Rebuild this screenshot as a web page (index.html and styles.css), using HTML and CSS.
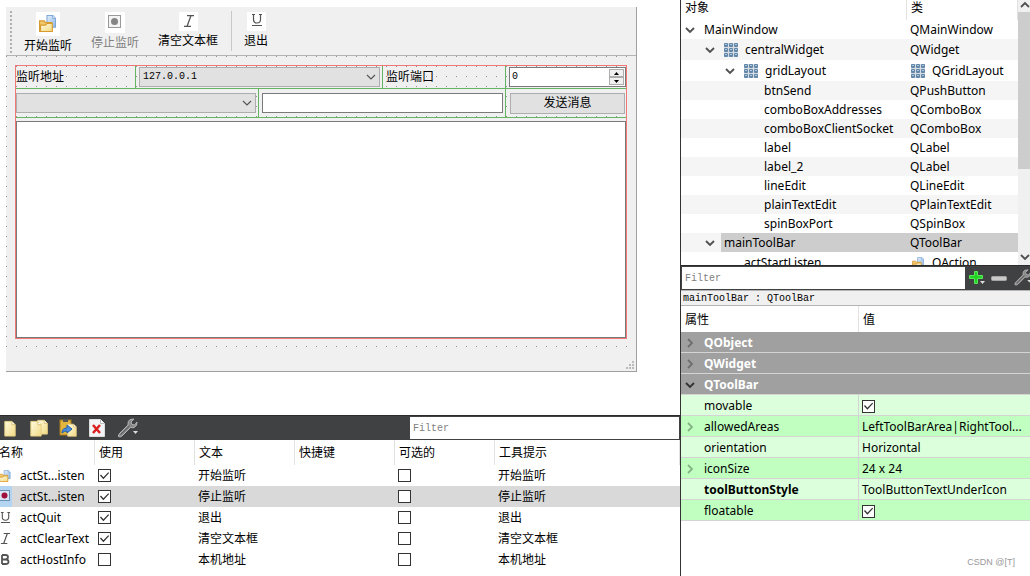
FILE: index.html
```
<!DOCTYPE html>
<html lang="zh-CN">
<head>
<meta charset="utf-8">
<title>MainWindow</title>
<link rel="stylesheet" href="styles.css">
</head>
<body>
<svg class="defs" aria-hidden="true">
  <defs>
    <linearGradient id="gold" x1="0" y1="0" x2="1" y2="1"><stop offset="0" stop-color="#fffbe0"/><stop offset="1" stop-color="#f1d983"/></linearGradient>
    <linearGradient id="blue" x1="0" y1="0" x2="1" y2="1"><stop offset="0" stop-color="#e3effb"/><stop offset="1" stop-color="#8fb8e6"/></linearGradient>
    <symbol id="open" viewBox="0 0 16 16">
      <path d="M7.500 .5H13L15.500 3v8.500h-8z" fill="url(#blue)" stroke="#7ea7d8"/>
      <path d="M13 .5V3h2.500" fill="#fff" stroke="#7ea7d8"/>
      <path d="M.5 5.500H5L6 7h6v8.500H.5z" fill="#f2c66a" stroke="#d39a35"/>
      <path d="M1.500 9.500H6L7.500 8h5v7.500h-11z" fill="url(#gold)" stroke="#d99a2c"/>
    </symbol>
    <symbol id="italic" viewBox="0 0 12 12"><path d="M4 .5h7M1 11.500h7M8 .5L4 11.500" fill="none" stroke="#555" stroke-width="1.300"/></symbol>
    <symbol id="underline" viewBox="0 0 12 12"><path d="M1 .5h3M8 .5h3M2.500 .5v5q0 3.500 3.500 3.500t3.500-3.500v-5M1 11.500h10" fill="none" stroke="#555" stroke-width="1.200"/></symbol>
    <symbol id="gridicon" viewBox="0 0 14 14">
      <rect width="14" height="14" fill="#d5dce3"/>
      <g fill="#6487a8"><rect width="4" height="4" rx="1"/><rect x="5" width="4" height="4" rx="1"/><rect x="10" width="4" height="4" rx="1"/><rect y="5" width="4" height="4" rx="1"/><rect x="5" y="5" width="4" height="4" rx="1"/><rect x="10" y="5" width="4" height="4" rx="1"/><rect y="10" width="4" height="4" rx="1"/><rect x="5" y="10" width="4" height="4" rx="1"/><rect x="10" y="10" width="4" height="4" rx="1"/></g>
      <path d="M1 1.500h2M6 1.500h2M11 1.500h2M1 6.500h2M6 6.500h2M11 6.500h2M1 11.500h2M6 11.500h2M11 11.500h2" stroke="#a9c8e2"/>
    </symbol>
    <symbol id="down" viewBox="0 0 10 10"><path d="M1 3l4 4 4-4" fill="none" stroke="currentColor" stroke-width="1.800"/></symbol>
    <symbol id="thin" viewBox="0 0 10 10"><path d="M1 3l4 4 4-4" fill="none" stroke="#555" stroke-width="1.200"/></symbol>
    <symbol id="right" viewBox="0 0 10 10"><path d="M3 1l4 4-4 4" fill="none" stroke="currentColor" stroke-width="1.800"/></symbol>
    <symbol id="page" viewBox="0 0 12 18"><path d="M.5 1.500H8L11.500 5v12H.5z" fill="url(#gold)" stroke="#e8cf85"/><path d="M8 1.500V5h3.500" fill="#fff" stroke="#d9bd6c"/></symbol>
    <symbol id="wrench" viewBox="0 0 22 20"><path d="M1.500 18.500Q1 17 3 15L11 7Q10.500 3 13 1.500L17 1l-3 3 1 2.500 2.500.5 2.500-3Q20.500 8 17 9.500q-2 .5-3.500 0L5 18q-2 1.500-3.500.5z" fill="#888" stroke="#b5b5b5"/><path d="M3.500 16.500L12.500 8" stroke="#555"/><path d="M16 13h5l-2.500 3z" fill="#ddd"/></symbol>
  </defs>
</svg>
<div class="designer">
  <main class="left">
    <section class="canvas">
      <div class="form">
        <div class="toolbar">
          <span class="handle"></span>
          <button class="tool"><svg class="pic pic-l" viewBox="0 0 24 24"><use href="#open" x="3" y="3" width="17" height="17"/></svg><span>开始监听</span></button>
          <button class="tool" disabled><svg class="pic pic-m" viewBox="0 0 20 21"><rect x="3.500" y="3.500" width="12" height="12" fill="#f4f4f4" stroke="#999"/><circle cx="9.500" cy="9.500" r="3.500" fill="#858585"/></svg><span>停止监听</span></button>
          <button class="tool"><svg class="pic pic-s" viewBox="0 0 19 19"><use href="#italic" x="4" y="3" width="12" height="12"/></svg><span>清空文本框</span></button>
          <span class="sep"></span>
          <button class="tool"><svg class="pic pic-s" viewBox="0 0 19 19"><use href="#underline" x="4" y="2" width="12" height="12"/></svg><span>退出</span></button>
        </div>
        <div class="central">
          <div class="layout">
            <label class="cell" for="addr">监听地址</label>
            <div class="cell two edge"><div class="combo"><select id="addr"><option>127.0.0.1</option></select><svg><use href="#thin"/></svg></div></div>
            <label class="cell edge" for="port">监听端口</label>
            <div class="cell edge"><div class="spin"><input id="port" type="number" value="0"><div class="steps"><button aria-label="增加"><svg viewBox="0 0 5 3"><path d="M0 3L2.500 0 5 3z"/></svg></button><button aria-label="减少"><svg viewBox="0 0 5 3"><path d="M0 0L2.500 3 5 0z"/></svg></button></div></div></div>
            <div class="cell two tall"><div class="combo wide"><select aria-label="客户端"><option></option></select><svg><use href="#thin"/></svg></div></div>
            <div class="cell two tall edge"><input class="line" type="text" aria-label="消息"></div>
            <div class="cell tall edge"><button class="send">发送消息</button></div>
            <textarea class="plain" aria-label="记录"></textarea>
          </div>
        </div>
        <div class="status"><svg viewBox="0 0 8 8"><path d="M6 0h2v2H6zM3 3h2v2H3zM6 3h2v2H6zM0 6h2v2H0zM3 6h2v2H3zM6 6h2v2H6z" fill="#bbb"/></svg></div>
      </div>
    </section>
    <section class="actions">
      <div class="darkbar">
        <div class="icons">
          <svg class="i-page"><use href="#page"/></svg>
          <svg class="i-std" viewBox="0 0 18 18"><use href="#page" x="7" width="11" height="16"/><use href="#page" x="0" y="1" width="12" height="17"/></svg>
          <svg class="i-std" viewBox="0 0 18 18"><rect x="1" y="1" width="11" height="15" fill="#e4b63d" stroke="#a87a1c"/><rect x="4" y="0" width="5" height="3" fill="#555"/><use href="#page" x="8" y="4" width="10" height="14"/><path d="M3 14q0-5 5-5V6l5 4-5 4v-2q-3 0-5 2z" fill="#4d8fe0" stroke="#245fa8"/></svg>
          <svg class="i-std" viewBox="0 0 18 18"><path d="M1.500.5h11l4 4v13h-15z" fill="#f3f4f6" stroke="#ddd"/><path d="M12.500.5v4h4" fill="#fff" stroke="#bbb"/><path d="M5 6l7 8M12 6l-7 8" stroke="#dc1f1f" stroke-width="2.500"/></svg>
          <svg class="i-wrench"><use href="#wrench"/></svg>
        </div>
        <input class="filter" type="text" placeholder="Filter" aria-label="Filter">
      </div>
      <table class="acttable">
        <thead><tr><th class="c-name">名称</th><th class="c-std">使用</th><th class="c-std">文本</th><th class="c-std">快捷键</th><th class="c-std">可选的</th><th>工具提示</th></tr></thead>
        <tbody>
          <tr><td><div class="nm"><svg class="cut" viewBox="0 0 12 12"><use href="#open" x="-2" width="13" height="12"/></svg>actSt...isten</div></td><td><input type="checkbox" checked aria-label="使用"></td><td>开始监听</td><td></td><td><input type="checkbox" aria-label="可选的"></td><td>开始监听</td></tr>
          <tr class="sel"><td><div class="nm"><svg class="cut chosen" viewBox="0 0 12 21"><rect x="-1.500" y="4.500" width="11" height="10" fill="#d9e5f2" stroke="#6d8fb3"/><circle cx="4.500" cy="9.500" r="3" fill="#a0103c"/></svg>actSt...isten</div></td><td><input type="checkbox" checked aria-label="使用"></td><td>停止监听</td><td></td><td><input type="checkbox" aria-label="可选的"></td><td>停止监听</td></tr>
          <tr><td><div class="nm"><svg class="cut" viewBox="0 0 12 12"><use href="#underline" x="0" width="11" height="11"/></svg>actQuit</div></td><td><input type="checkbox" checked aria-label="使用"></td><td>退出</td><td></td><td><input type="checkbox" aria-label="可选的"></td><td>退出</td></tr>
          <tr><td><div class="nm"><svg class="cut" viewBox="0 0 12 12"><use href="#italic" x="0" width="11" height="11"/></svg>actClearText</div></td><td><input type="checkbox" checked aria-label="使用"></td><td>清空文本框</td><td></td><td><input type="checkbox" aria-label="可选的"></td><td>清空文本框</td></tr>
          <tr><td><div class="nm"><svg class="cut" viewBox="0 0 12 12"><path d="M2 1v9M2 1h3.500q2.500 0 2.500 2T5.500 5.500H2M5.500 5.500Q8.500 5.500 8.500 7.800T5.500 10H2" fill="none" stroke="#555" stroke-width="1.800"/></svg>actHostInfo</div></td><td><input type="checkbox" aria-label="使用"></td><td>本机地址</td><td></td><td><input type="checkbox" aria-label="可选的"></td><td>本机地址</td></tr>
        </tbody>
      </table>
    </section>
  </main>
  <aside class="right">
    <section class="objects">
      <table class="tree">
        <thead><tr><th class="t-obj">对象</th><th>类</th></tr></thead>
        <tbody>
          <tr><td><div class="node"><svg class="chev"><use href="#down"/></svg>MainWindow</div></td><td>QMainWindow</td></tr>
          <tr class="big"><td><div class="node d1"><svg class="chev"><use href="#down"/></svg><svg class="gi"><use href="#gridicon"/></svg>centralWidget</div></td><td>QWidget</td></tr>
          <tr class="big"><td><div class="node d2"><svg class="chev"><use href="#down"/></svg><svg class="gi"><use href="#gridicon"/></svg>gridLayout</div></td><td><div class="cls"><svg class="gi"><use href="#gridicon"/></svg>QGridLayout</div></td></tr>
          <tr><td><div class="node d3">btnSend</div></td><td>QPushButton</td></tr>
          <tr><td><div class="node d3">comboBoxAddresses</div></td><td>QComboBox</td></tr>
          <tr><td><div class="node d3">comboBoxClientSocket</div></td><td>QComboBox</td></tr>
          <tr><td><div class="node d3">label</div></td><td>QLabel</td></tr>
          <tr><td><div class="node d3">label_2</div></td><td>QLabel</td></tr>
          <tr><td><div class="node d3">lineEdit</div></td><td>QLineEdit</td></tr>
          <tr><td><div class="node d3">plainTextEdit</div></td><td>QPlainTextEdit</td></tr>
          <tr><td><div class="node d3">spinBoxPort</div></td><td>QSpinBox</td></tr>
          <tr class="cur"><td><div class="node d1"><svg class="chev"><use href="#down"/></svg><span class="curname">mainToolBar</span></div></td><td>QToolBar</td></tr>
          <tr class="big"><td><div class="node act">actStartListen</div></td><td><div class="cls"><svg class="gi"><use href="#open" width="12" height="12" x="1" y="1"/></svg>QAction</div></td></tr>
        </tbody>
      </table>
      <div class="scroll"><svg class="up" viewBox="0 0 10 10"><path d="M1 7l4-4 4 4" fill="none" stroke="#505050" stroke-width="1.800"/></svg><span class="thumb"></span><svg class="dn"><use href="#down"/></svg></div>
    </section>
    <section class="props">
      <div class="darkbar">
        <input class="filter" type="text" placeholder="Filter" aria-label="Filter">
        <div class="pbtns">
          <svg class="i-plus" viewBox="0 0 17 16"><path d="M5.500 1.500h3v4h5v3h-5v5h-3v-5h-5v-3h5z" fill="#22d322" stroke="#5be65b"/><path d="M11 11h5l-2.500 3z" fill="#ddd"/></svg>
          <svg class="i-minus" viewBox="0 0 16 16"><rect x=".5" y="6.500" width="15" height="4" rx="1" fill="#c9c9c9" stroke="#a5a5a5"/></svg>
          <svg class="i-wr2" viewBox="0 0 17 18"><use href="#wrench" width="20" height="17" x="0"/></svg>
        </div>
      </div>
      <div class="caption">mainToolBar : QToolBar</div>
      <table class="proptable">
        <thead><tr><th class="p-name">属性</th><th>值</th></tr></thead>
        <tbody>
          <tr class="group"><td colspan="2"><div class="pn"><svg class="chev"><use href="#right"/></svg>QObject</div></td></tr>
          <tr class="group"><td colspan="2"><div class="pn"><svg class="chev"><use href="#right"/></svg>QWidget</div></td></tr>
          <tr class="group open"><td colspan="2"><div class="pn"><svg class="chev"><use href="#down"/></svg>QToolBar</div></td></tr>
          <tr class="lite"><td><div class="pn leaf">movable</div></td><td><input type="checkbox" checked aria-label="movable"></td></tr>
          <tr class="deep"><td><div class="pn"><svg class="chev"><use href="#right"/></svg>allowedAreas</div></td><td class="clip">LeftToolBarArea|RightTool...</td></tr>
          <tr class="lite"><td><div class="pn leaf">orientation</div></td><td>Horizontal</td></tr>
          <tr class="deep"><td><div class="pn"><svg class="chev"><use href="#right"/></svg>iconSize</div></td><td>24 x 24</td></tr>
          <tr class="lite"><td><div class="pn leaf"><b>toolButtonStyle</b></div></td><td>ToolButtonTextUnderIcon</td></tr>
          <tr class="deep"><td><div class="pn leaf">floatable</div></td><td><input type="checkbox" checked aria-label="floatable"></td></tr>
        </tbody>
      </table>
      <div class="mark">CSDN @[T]</div>
    </section>
  </aside>
</div>
</body>
</html>
```
FILE: styles.css
```
* { box-sizing: border-box; }
body {
  margin: 0;
  background: #fff;
  color: #000;
  font-family: "Noto Sans", "Noto Sans CJK SC", sans-serif;
  font-size: 12px;
  line-height: 16px;
}
button, input, select, textarea { font: inherit; color: inherit; margin: 0; border-radius: 0; outline: 0; }
svg { display: block; flex: none; }
.defs { position: absolute; width: 0; height: 0; }
.designer { display: grid; grid-template-columns: minmax(0, 1fr) 350px; min-height: 100vh; }
.left { display: flex; flex-direction: column; min-width: 0; }
.canvas { flex: 1; display: flex; padding: 7px 43px 43px 6px; }
.form { flex: 1; display: flex; flex-direction: column; background: #f0f0f0; border-right: 1px solid #a0a0a0; border-bottom: 1px solid #a0a0a0; min-width: 0; }

/* form toolbar */
.toolbar { display: flex; align-items: flex-start; height: 49px; padding: 4px 4px 3px; border-bottom: 1px solid #b4b4b4; }
.handle { width: 2px; height: 42px; margin-right: 12px; background: repeating-linear-gradient(#b0b0b0 0 2px, transparent 2px 4px); }
.tool { display: flex; flex-direction: column; align-items: center; gap: 2px; padding: 1px 0; margin-right: 19px; border: 0; background: none; white-space: nowrap; }
.tool:disabled { color: #808080; }
.pic { background: #fff; }
.pic-l { width: 24px; height: 24px; }
.pic-m { width: 20px; height: 21px; }
.pic-s { width: 19px; height: 19px; }
.sep { width: 1px; height: 40px; margin: 0 12px 0 -6px; background: #c8c8c8; }

/* form body with the design grid */
.central {
  flex: 1;
  display: flex;
  padding: 9px 9px 10px;
  background-image: linear-gradient(90deg, transparent 1px, #f0f0f0 1px), linear-gradient(#909090 1px, transparent 1px);
  background-size: 10px 10px;
}
.layout {
  flex: 1;
  display: grid;
  grid-template-columns: 119fr 123fr 124fr 123fr 121fr;
  grid-template-rows: 23px 29px 1fr;
  border: 1px solid #f07878;
  min-width: 0;
}
.cell { display: flex; align-items: center; min-width: 0; border-bottom: 1px solid #64b464; }
.edge { border-left: 1px solid #64b464; padding-left: 3px; }
.two { grid-column: span 2; }
.combo, .spin { display: flex; flex: 1; position: relative; height: 20px; margin-right: 2px; min-width: 0; }
.combo select { flex: 1; appearance: none; width: 100%; padding: 0 3px; border: 1px solid #adadad; background: #e1e1e1; font-family: "Liberation Mono", monospace; font-size: 10px; }
.combo svg { position: absolute; right: 4px; top: 5px; width: 10px; height: 10px; pointer-events: none; }
.line { flex: 1; width: 100%; height: 20px; margin-right: 2px; border: 1px solid #7a7a7a; background: #fff; }
.spin { background: #fff; border: 1px solid #7a7a7a; margin-right: 0; }
.spin input { flex: 1; min-width: 0; border: 0; padding: 0 2px; background: none; appearance: textfield; font-family: "Liberation Mono", monospace; font-size: 10px; }
.steps { display: flex; flex-direction: column; width: 15px; margin: 1px; }
.steps button { flex: 1; display: flex; align-items: center; justify-content: center; padding: 0; border: 1px solid #adadad; background: #f0f0f0; }
.steps svg { width: 5px; height: 3px; }
.send { flex: 1; height: 21px; margin: 0 1px; padding: 0; border: 1px solid #adadad; background: #e1e1e1; line-height: 16px; }
.plain { grid-column: 1 / -1; width: 100%; margin-top: 3px; border: 1px solid #7a7a7a; background: #fff; resize: none; }
.status { display: flex; justify-content: flex-end; align-items: flex-end; height: 22px; padding: 2px; }
.status svg { width: 8px; height: 8px; }

/* dark tool strips */
.darkbar { display: flex; align-items: center; justify-content: space-between; height: 25px; background: #404142; border-top: 1px solid #2b2b2b; }
.filter { height: 22px; padding: 0 3px; border: 0; background: #fff; font-family: "Liberation Mono", monospace; font-size: 10px; }
.filter::placeholder { color: #808080; opacity: 1; }
.actions .filter { width: 269px; margin-right: 1px; }
.icons { display: flex; align-items: center; padding-left: 4px; gap: 11px; }
.i-page { width: 12px; height: 17px; margin-right: 3px; }
.i-std { width: 18px; height: 18px; }
.i-wrench { width: 22px; height: 20px; }

/* tables */
table { width: 100%; border-collapse: separate; border-spacing: 0; table-layout: fixed; }
th { font-weight: 400; text-align: left; padding: 0; border-right: 1px solid #e2e2e2; }
td { padding: 0; white-space: nowrap; overflow: hidden; }
.acttable th { height: 25px; padding-left: 4px; }
.acttable .c-name { width: 95px; padding-left: 0; text-indent: -1px; }
.c-std { width: 100px; }
.acttable td { height: 21px; padding-left: 3px; }
.acttable td:first-child { padding-left: 0; }
.acttable { margin-bottom: 6px; }
.sel td { background: #d9d9d9; }
.nm { display: flex; align-items: center; gap: 8px; }
.cut { width: 12px; height: 12px; }
.cut.chosen { height: 21px; background: #b3d5f2; }
input[type="checkbox"] { appearance: none; display: grid; place-items: center; width: 13px; height: 13px; border: 1px solid #333; background: #fff; }
input[type="checkbox"]:checked::before { content: ""; width: 11px; height: 11px; background: #333; clip-path: polygon(9% 50%, 18% 42%, 40% 66%, 84% 20%, 92% 28%, 40% 84%); }

/* object tree */
.right { display: flex; flex-direction: column; border-left: 1px solid #333; min-width: 0; }
.objects { display: flex; height: 265px; overflow: hidden; }
.tree { flex: 1; align-self: flex-start; }
.tree th { height: 20px; padding: 0 0 4px 4px; }
.t-obj { width: 226px; }
.tree td { height: 19px; }
.tree td + td { padding-left: 3px; }
.tree .big td { height: 21px; }
.tree tbody tr:nth-child(even) td { background: #f5f5f5; }
.node, .cls, .pn { display: flex; align-items: center; }
.node { padding-left: 4px; }
.chev { width: 10px; height: 10px; margin-right: 9px; color: #505050; }
.gi { width: 14px; height: 14px; margin-right: 7px; }
.cls .gi { margin-left: 1px; }
.d1 { padding-left: 24px; }
.d2 { padding-left: 44px; }
.d3 { padding-left: 83px; }
.act { padding-left: 63px; }
.tree tbody tr.cur td { background: #cdcdcd; }
.tree tbody tr.cur td:first-child { background: linear-gradient(90deg, #f5f5f5 40px, #cdcdcd 40px); }
.scroll { display: flex; flex-direction: column; width: 12px; background: #f0f0f0; }
.up, .dn { width: 10px; height: 10px; margin-left: 2px; color: #505050; }
.up { margin-bottom: 2px; }
.dn { margin-top: auto; margin-bottom: 3px; }
.thumb { height: 157px; background: #cdcdcd; }

/* property editor */
.props { flex: 1; display: flex; flex-direction: column; }
.props .filter { flex: 1; min-width: 0; margin-left: 1px; }
.pbtns { display: flex; align-items: center; gap: 5px; padding-left: 4px; }
.i-plus { width: 17px; height: 16px; }
.i-minus { width: 16px; height: 16px; margin-right: 1px; }
.i-wr2 { width: 17px; height: 18px; }
.caption { height: 16px; padding-left: 2px; border: 1px solid #b4b4b4; border-left: 0; border-right: 0; background: #f0f0f0; font-family: "Liberation Mono", monospace; font-size: 10px; line-height: 16px; }
.proptable th { height: 26px; padding: 2px 0 0 4px; }
.proptable th:last-child { border-right: 0; }
.p-name { width: 178px; }
.proptable td { height: 21px; padding-top: 2px; border-bottom: 1px solid #d4d4d4; }
.proptable td + td { padding-left: 3px; }
.lite td, .deep td { border-right: 1px solid #d4d4d4; }
.lite td:last-child, .deep td:last-child { border-right: 0; }
.pn { padding-left: 4px; }
.leaf { padding-left: 23px; }
.group td { background: #a0a0a0; color: #fff; font-weight: 700; }
.group .chev { color: #6e6e6e; }
.group.open .chev { color: #333; }
.lite td { background: #dcffdc; }
.deep td { background: #c0ffc0; }
.deep .chev { color: #86b386; }
.mark { margin-top: auto; padding: 0 15px 6px 0; text-align: right; color: #999; font-family: "Liberation Sans", sans-serif; font-size: 9px; }
```
